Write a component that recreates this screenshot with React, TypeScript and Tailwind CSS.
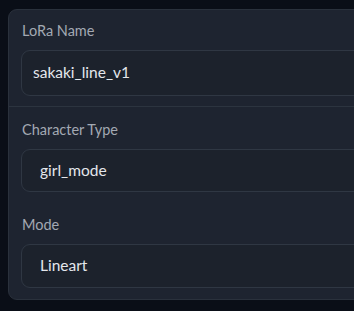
const fields = [
  { label: 'LoRa Name', value: 'sakaki_line_v1', indent: 'pl-[11px]', h: 'h-[46px]' },
  { label: 'Character Type', value: 'girl_mode', indent: 'pl-[18px]', h: 'h-[43px]' },
  { label: 'Mode', value: 'Lineart', indent: 'pl-[18px]', h: 'h-[44px]' },
];

const Field = ({ label, value, indent, h }: (typeof fields)[number]) => (
  <div className="flex flex-col gap-[9px]">
    <span className="text-[14.5px] leading-[20px] text-[#a3a9b3] pl-[1px]">{label}</span>
    <div
      className={`${h} ${indent} flex items-center rounded-[9px] border border-[#2f3743] bg-[#1c222c] text-[15.5px] text-[#e4e7ec]`}
    >
      {value}
    </div>
  </div>
);

export default function App() {
  return (
    <div
      className="w-[354px] h-[311px] overflow-hidden bg-[#0a0e17] pt-[9px] pl-[8px]"
      style={{ fontFamily: 'Lato, "Noto Sans", sans-serif' }}
    >
      <div className="w-[400px] h-[291px] rounded-[9px] border border-[#2a313c] bg-[#1e2430] flex flex-col">
        <div className="px-[12px] pt-[11px] pb-[10px] border-b border-[#2c343f]">
          <Field {...fields[0]} />
        </div>
        <div className="px-[12px] pt-[13px] flex flex-col gap-[23px]">
          <Field {...fields[1]} />
          <Field {...fields[2]} />
        </div>
      </div>
    </div>
  );
}
